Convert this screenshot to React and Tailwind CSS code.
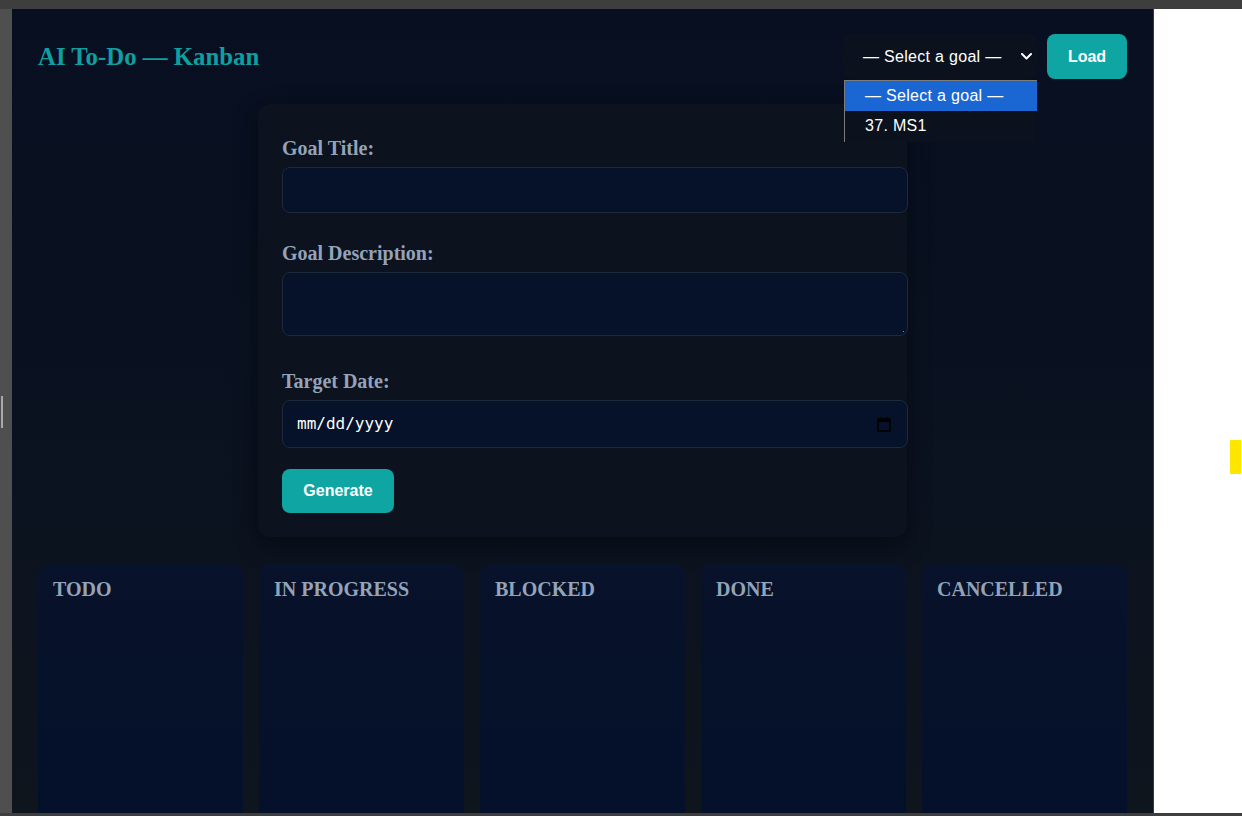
import React from "react";

const serif = "font-['Liberation_Serif','Times_New_Roman',serif]";
const sans = "font-['Liberation_Sans',Arial,sans-serif]";

function Label({ children, className = "" }) {
  return (
    <div className={`${serif} text-[20px] leading-[23px] font-bold text-[#94a3b8] ${className}`}>
      {children}
    </div>
  );
}

export default function App() {
  const columns = ["TODO", "IN PROGRESS", "BLOCKED", "DONE", "CANCELLED"];
  return (
    <div className="w-[1242px] h-[816px] flex flex-col bg-white overflow-hidden">
      <div className="h-[9px] bg-[#3e3e3e] shrink-0" />
      <div className="flex flex-1 min-h-0">
        <div className="w-[12px] bg-[#4f4f4f] flex flex-col shrink-0">
          <div className="ml-[1px] mt-[387px] w-[2px] h-[32px] bg-[#a8a8a8]" />
        </div>
        <main className="w-[1141px] shrink-0 overflow-hidden bg-linear-to-b from-[#070f21] via-[#0a1220] to-[#0f151d] px-[26px]">
          <header className="pt-[25px] flex items-center justify-between">
            <h1 className={`${serif} text-[24.8px] leading-[28px] font-bold text-[#0f9fa1]`}>
              AI To-Do — Kanban
            </h1>
            <div className="flex items-center gap-[10px]">
              <div className="relative">
                <div className={`${sans} w-[194px] h-[45px] rounded-[8px] bg-[#0b111d] text-white text-[16px] flex items-center pl-[20px] pr-[5px]`}>
                  <span className="flex-1 tracking-[0.3px]">— Select a goal —</span>
                  <svg width="11" height="7" viewBox="0 0 11 7" className="mr-0">
                    <polyline points="1,1 5.5,5.5 10,1" fill="none" stroke="white" strokeWidth="2" strokeLinecap="round" strokeLinejoin="round" />
                  </svg>
                </div>
                <div className={`${sans} absolute left-[1px] top-[46px] w-[193px] bg-[#0b111d] border-l border-t border-[#7c7c7c] text-white text-[16px] tracking-[0.3px] pb-[1px] z-10`}>
                  <div className="h-[30px] bg-[#1a67d3] flex items-center pl-[20px]">— Select a goal —</div>
                  <div className="h-[30px] flex items-center pl-[20px]">37. MS1</div>
                </div>
              </div>
              <button className={`${sans} w-[80px] h-[45px] rounded-[8px] bg-[#0fa5a3] text-white font-bold text-[16px]`}>
                Load
              </button>
            </div>
          </header>

          <section className="mx-auto mt-[25px] w-[649px] rounded-[12px] bg-[#0c121e] shadow-[0_8px_24px_rgba(0,0,0,0.45)] p-6 flex flex-col items-start">
            <Label className="mt-[9px]">Goal Title:</Label>
            <div className="mt-[7px] w-[626px] h-[46px] rounded-[8px] border border-[#1e293b] bg-[#06112a]" />
            <Label className="mt-[29px]">Goal Description:</Label>
            <div className="mt-[7px] w-[626px] h-[64px] rounded-[8px] border border-[#1e293b] bg-[#06112a] flex items-end justify-end p-[2px]">
              <svg width="5" height="5" viewBox="0 0 5 5">
                <rect x="3" y="3" width="1" height="1" fill="#8a8f99" />
              </svg>
            </div>
            <Label className="mt-[34px]">Target Date:</Label>
            <div className="mt-[7px] w-[626px] h-[48px] rounded-[8px] border border-[#1e293b] bg-[#06112a] flex items-center pl-[14px] pr-[16px]">
              <span className="flex-1 font-['DejaVu_Sans_Mono',monospace] text-[16px] text-white">mm/dd/yyyy</span>
              <svg width="14" height="16" viewBox="0 0 14 16">
                <rect x="1" y="3" width="12" height="12" fill="none" stroke="#000" strokeWidth="1.6" />
                <rect x="1" y="3" width="12" height="3" fill="#000" />
                <rect x="3.5" y="1" width="1.5" height="3" fill="#000" />
                <rect x="9" y="1" width="1.5" height="3" fill="#000" />
              </svg>
            </div>
            <button className={`${sans} mt-[21px] w-[112px] h-[44px] rounded-[8px] bg-[#0fa5a3] text-white font-bold text-[16px]`}>
              Generate
            </button>
          </section>

          <section className="mt-[27px] grid grid-cols-5 gap-4">
            {columns.map((c) => (
              <div key={c} className="h-[300px] rounded-t-[10px] bg-linear-to-b from-[#08122a] to-[#04102a] pt-[14px] px-[15px]">
                <h3 className={`${serif} text-[20px] leading-[23px] font-bold text-[#94a3b8]`}>{c}</h3>
              </div>
            ))}
          </section>
        </main>
        <div className="w-[1px] bg-[#3a3a3a] shrink-0" />
        <div className="flex-1 bg-white flex justify-end">
          <div className="mt-[431px] w-[11px] h-[34px] bg-[#ffe600] mr-[1px]" />
        </div>
      </div>
      <div className="h-[3px] bg-[#3e3e3e] shrink-0" />
    </div>
  );
}
